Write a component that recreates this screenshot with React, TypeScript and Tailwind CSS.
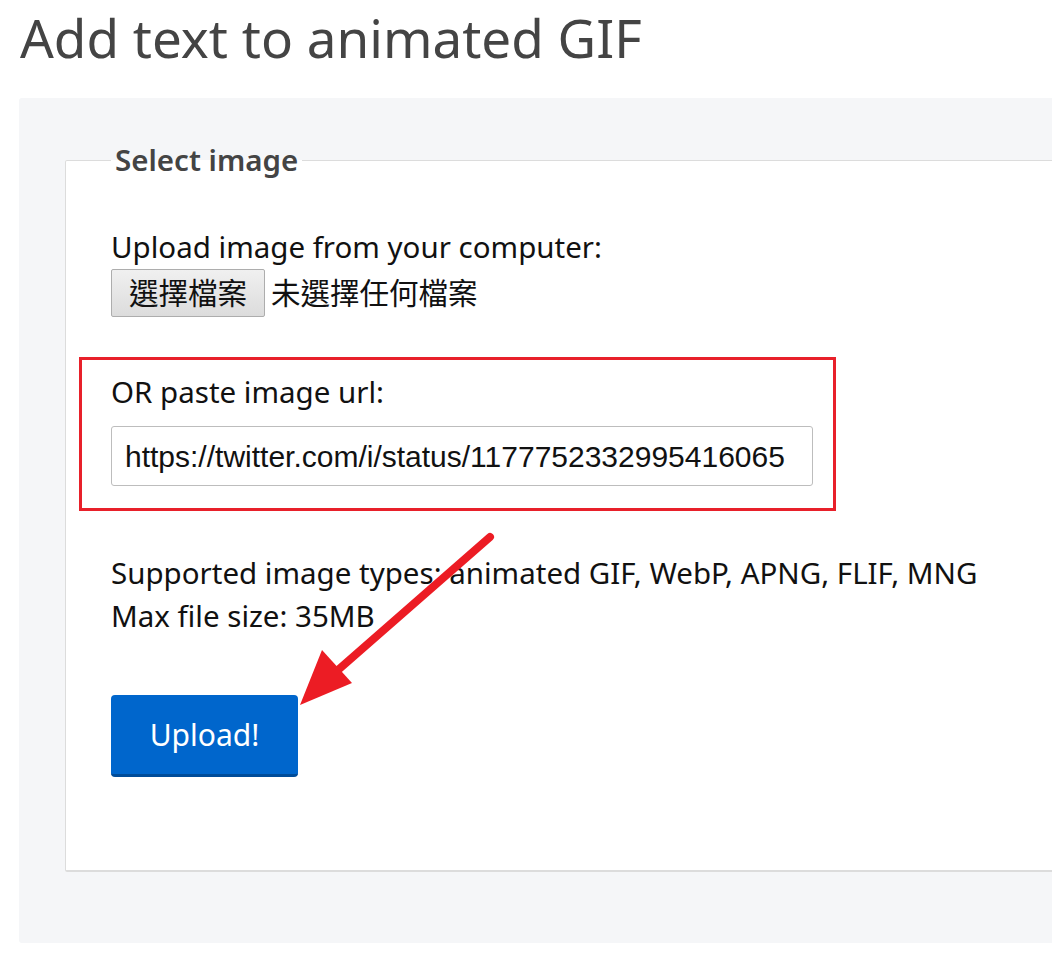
import React from "react";

const sans = { fontFamily: '"Noto Sans", "Noto Sans CJK TC", sans-serif' };

const Arrow = () => (
  <svg
    className="absolute left-[290px] top-[525px] pointer-events-none"
    width="210"
    height="190"
    viewBox="0 0 210 190"
  >
    <line x1="200" y1="12" x2="40" y2="152" stroke="#ec1c24" strokeWidth="8" strokeLinecap="round" />
    <polygon points="10,180 32,125 62,158" fill="#ec1c24" />
  </svg>
);

export default function App() {
  return (
    <div className="relative w-[1052px] h-[956px] overflow-hidden bg-white" style={sans}>
      <div className="pl-[19px]">
        <h1 className="text-[53px] leading-[76px] text-[#444] font-normal pl-[1px]">
          Add text to animated GIF
        </h1>
        <div className="mt-[22px] w-[1100px] bg-[#f5f6f8] rounded-[3px] pt-[45px] pb-[71px] pl-[46px]">
          <fieldset className="border border-[#dcdcdc] border-b-2 rounded-[2px] bg-white pl-[45px] pr-[40px] h-[729px]">
            <legend className="px-[4px] text-[29.5px] font-semibold text-[#444] leading-[34px]">
              Select image
            </legend>
            <div className="pt-[50px] text-[29.5px] leading-[40px] text-[#111]">
              Upload image from your computer:
            </div>
            <div className="flex items-center mt-[2px] h-[48px]">
              <button className="h-[48px] px-[17px] border border-[#adadad] rounded-[2px] bg-gradient-to-b from-[#f0f0f0] to-[#dcdcdc] text-[29.5px] leading-none text-[#111]">
                選擇檔案
              </button>
              <span className="ml-[6px] text-[29.5px] text-[#111]">未選擇任何檔案</span>
            </div>
            <div className="mt-[40px] -ml-[32px] w-[757px] border-[3px] border-[#e8202a] pl-[29px] pt-[12px] pb-[22px]">
              <div className="text-[29.5px] leading-[40px] text-[#111]">OR paste image url:</div>
              <div className="mt-[14px] w-[702px] h-[60px] border border-[#bdbdbd] rounded-[3px] flex items-center pl-[13px] text-[30px] text-[#111]" style={{ fontFamily: '"Liberation Sans", Arial, sans-serif' }}>
                https://twitter.com/i/status/1177752332995416065
              </div>
            </div>
            <div className="mt-[40px] text-[29.5px] leading-[43px] text-[#111]">
              <div>Supported image types: animated GIF, WebP, APNG, FLIF, MNG</div>
              <div>Max file size: 35MB</div>
            </div>
            <button className="mt-[58px] w-[187px] h-[82px] rounded-[4px] bg-[#0066cc] border-b-[3px] border-[#004c99] text-white text-[30px]">
              Upload!
            </button>
          </fieldset>
        </div>
      </div>
      <Arrow />
    </div>
  );
}
